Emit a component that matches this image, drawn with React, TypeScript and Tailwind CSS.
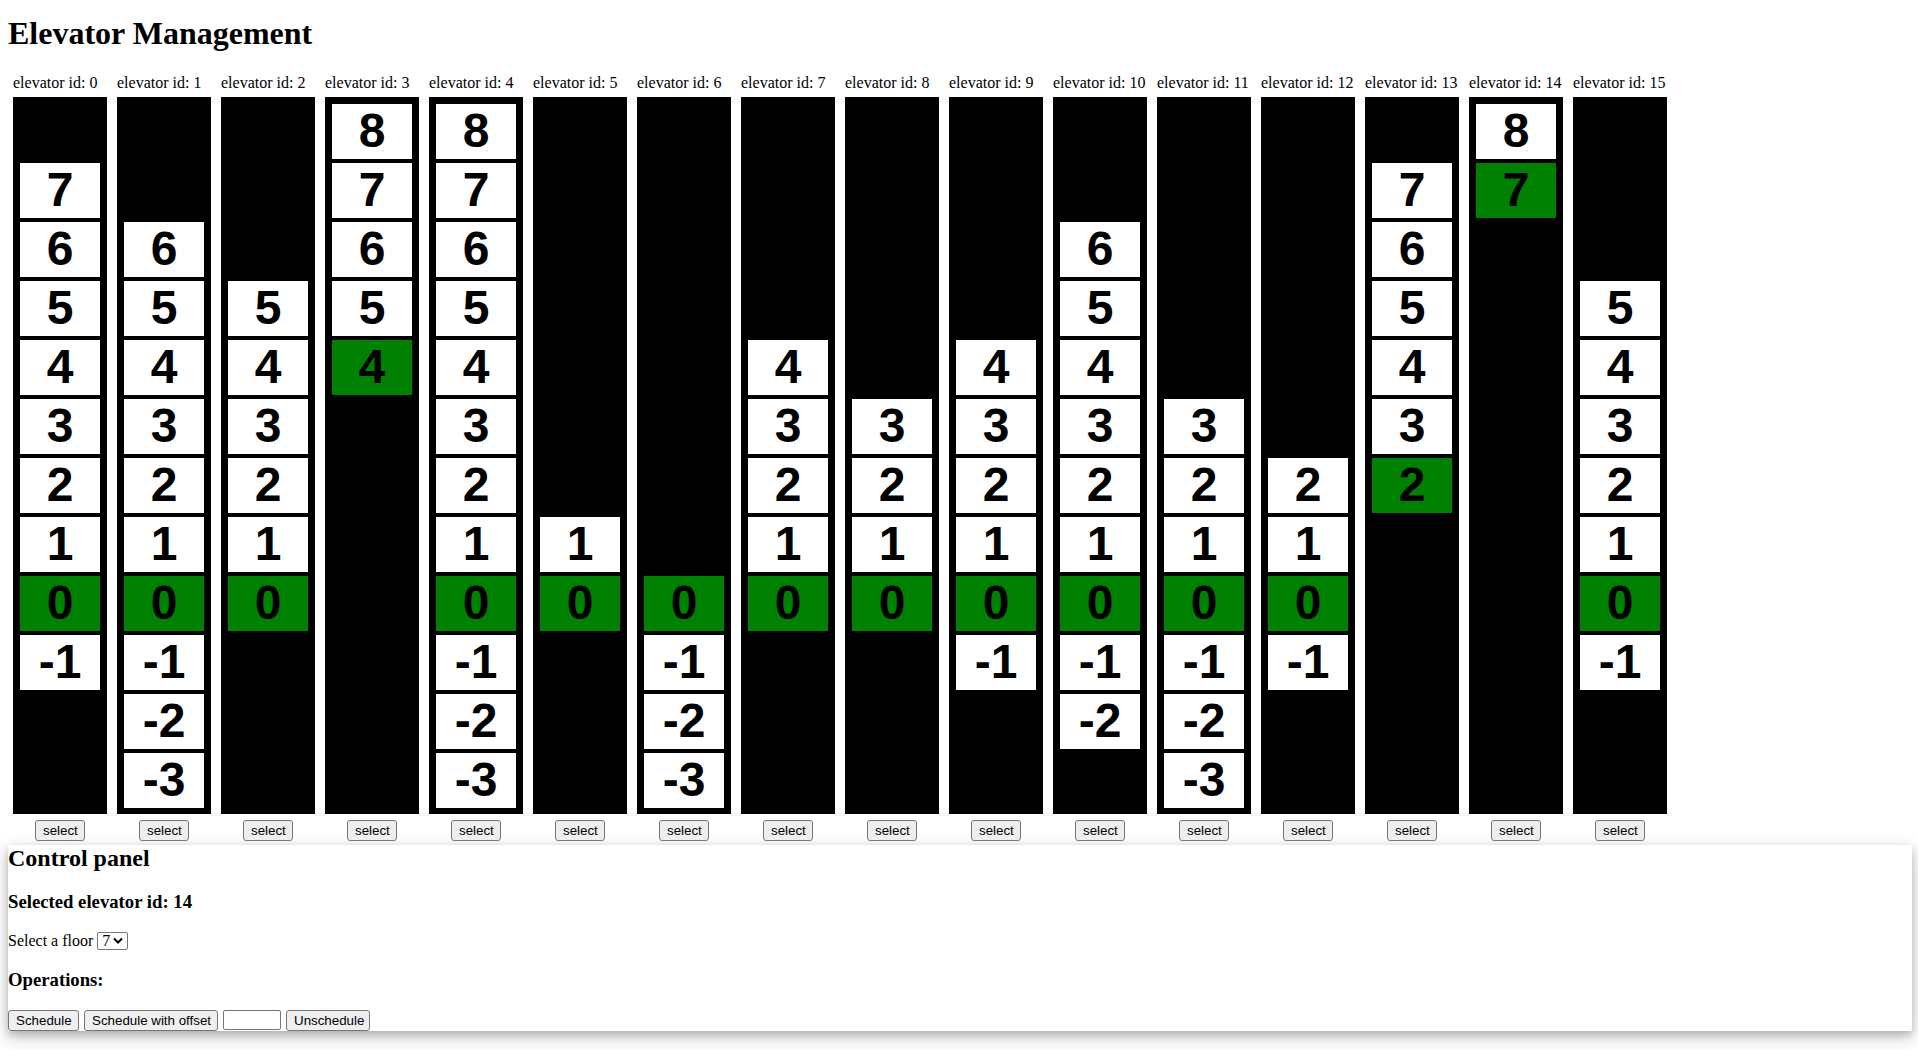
const elevators = [
  { id: 0, top: 7, bottom: -1, current: 0 },
  { id: 1, top: 6, bottom: -3, current: 0 },
  { id: 2, top: 5, bottom: 0, current: 0 },
  { id: 3, top: 8, bottom: 4, current: 4 },
  { id: 4, top: 8, bottom: -3, current: 0 },
  { id: 5, top: 1, bottom: 0, current: 0 },
  { id: 6, top: 0, bottom: -3, current: 0 },
  { id: 7, top: 4, bottom: 0, current: 0 },
  { id: 8, top: 3, bottom: 0, current: 0 },
  { id: 9, top: 4, bottom: -1, current: 0 },
  { id: 10, top: 6, bottom: -2, current: 0 },
  { id: 11, top: 3, bottom: -3, current: 0 },
  { id: 12, top: 2, bottom: -1, current: 0 },
  { id: 13, top: 7, bottom: 2, current: 2 },
  { id: 14, top: 8, bottom: 7, current: 7 },
  { id: 15, top: 5, bottom: -1, current: 0 },
];

// building has floors 8 .. -3, top first
const floors = [8, 7, 6, 5, 4, 3, 2, 1, 0, -1, -2, -3];

const btn =
  "h-[21px] whitespace-nowrap rounded-[3px] border border-[#767676] bg-[#efefef] px-[7px] font-['Liberation_Sans',Arial,sans-serif] text-[13.33px] leading-[15px] text-black";

function Shaft({ top, bottom, current }: { top: number; bottom: number; current: number }) {
  return (
    <div className="mt-[5px] w-[94px] bg-black px-[7px] pt-[7px] pb-[6px]">
      <div className="grid grid-rows-[repeat(12,55px)] gap-[4px]">
        {floors.map((f) => {
          if (f > top || f < bottom) return <div key={f} />;
          return (
            <div
              key={f}
              className={`flex items-center justify-center font-['Liberation_Sans',Arial,sans-serif] text-[48px] leading-none font-bold text-black ${
                f === current ? "bg-[#008000]" : "bg-white"
              }`}
            >
              {f}
            </div>
          );
        })}
      </div>
    </div>
  );
}

export default function App() {
  return (
    <div className="min-h-screen bg-white px-2 pt-[15px] font-['Liberation_Serif','Times_New_Roman',serif] text-black">
      <h1 className="mb-[22.5px] text-[32px] leading-[36px] font-bold">Elevator Management</h1>

      {/* ── shafts ─────────────────────────────── */}
      <div className="flex">
        {elevators.map((e) => (
          <div key={e.id} className="flex w-[104px] flex-col px-[5px]">
            <div className="text-[16px] leading-[18px] whitespace-nowrap">elevator id: {e.id}</div>
            <Shaft top={e.top} bottom={e.bottom} current={e.current} />
            <div className="mt-[6px] flex w-[94px] justify-center">
              <button className={`${btn} w-[50px] px-0`}>select</button>
            </div>
          </div>
        ))}
      </div>

      {/* ── control panel ──────────────────────── */}
      <div className="mt-[4px] mr-[-2px] bg-white shadow-[0_4px_8px_0_rgba(0,0,0,0.2),0_6px_20px_0_rgba(0,0,0,0.19)]">
        <h2 className="text-[24px] leading-[27px] font-bold">Control panel</h2>
        <h3 className="mt-[19px] text-[18.72px] leading-[21px] font-bold">Selected elevator id: 14</h3>
        <div className="mt-[19px] flex h-[20px] items-center">
          <span className="text-[16px] leading-[18px]">Select a floor</span>
          <span className="ml-[4px] flex h-[18px] w-[31px] items-center rounded-[2px] border border-[#767676] bg-white pl-[4px]">
            <span className="text-[16px] leading-[16px]">7</span>
            <svg className="ml-[3px]" width="10" height="7" viewBox="0 0 10 7">
              <path d="M1 1.5 L5 5.5 L9 1.5" fill="none" stroke="#000" strokeWidth="2" />
            </svg>
          </span>
        </div>
        <h3 className="mt-[18px] text-[18.72px] leading-[21px] font-bold">Operations:</h3>
        <div className="mt-[20px] flex gap-[5px]">
          <button className={`${btn} w-[71px] px-0`}>Schedule</button>
          <button className={`${btn} w-[134px] px-0`}>Schedule with offset</button>
          <input
            type="text"
            className="h-[20px] w-[58px] rounded-[2px] border border-[#767676] bg-white"
          />
          <button className={`${btn} w-[84px] px-0`}>Unschedule</button>
        </div>
      </div>
    </div>
  );
}
